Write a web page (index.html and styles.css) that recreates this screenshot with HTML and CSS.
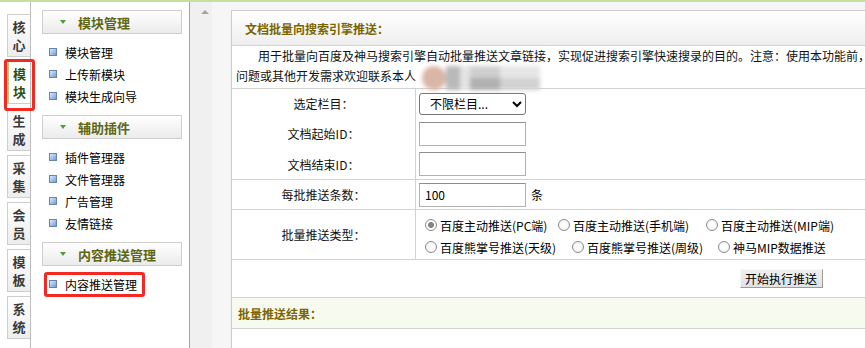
FILE: index.html
```html
<!DOCTYPE html>
<html lang="zh-CN">
<head>
<meta charset="utf-8">
<title>文档批量向搜索引擎推送</title>
<link rel="stylesheet" href="styles.css">
</head>
<body>
<div class="topline"></div>
<div class="frame">
  <nav class="tabs">
    <a class="tab"><span>核</span><span>心</span></a>
    <a class="tab active"><span>模</span><span>块</span></a>
    <a class="tab"><span>生</span><span>成</span></a>
    <a class="tab"><span>采</span><span>集</span></a>
    <a class="tab"><span>会</span><span>员</span></a>
    <a class="tab"><span>模</span><span>板</span></a>
    <a class="tab"><span>系</span><span>统</span></a>
    <span class="mark mark-tab"></span>
  </nav>
  <aside class="sidebar">
    <section class="group">
      <h3 class="group-head"><span class="caret"></span>模块管理</h3>
      <ul class="group-list">
        <li>模块管理</li>
        <li>上传新模块</li>
        <li>模块生成向导</li>
      </ul>
    </section>
    <section class="group">
      <h3 class="group-head"><span class="caret"></span>辅助插件</h3>
      <ul class="group-list">
        <li>插件管理器</li>
        <li>文件管理器</li>
        <li>广告管理</li>
        <li>友情链接</li>
      </ul>
    </section>
    <section class="group">
      <h3 class="group-head"><span class="caret"></span>内容推送管理</h3>
      <ul class="group-list">
        <li class="marked">内容推送管理<span class="mark mark-item"></span></li>
      </ul>
    </section>
  </aside>
  <div class="scrollbar"><span class="arrow-up"></span></div>
  <main class="main">
    <div class="panel">
      <div class="panel-head">文档批量向搜索引擎推送：</div>
      <div class="desc">
        <p class="line first">用于批量向百度及神马搜索引擎自动批量推送文章链接，实现促进搜索引擎快速搜录的目的。注意：使用本功能前，</p>
        <p class="line">问题或其他开发需求欢迎联系本人<span class="blur"><span class="b1"></span><span class="b2"></span><span class="b3"></span><span class="b4"></span><span class="b5"></span></span></p>
      </div>
      <div class="form">
        <div class="row r1">
          <div class="label">选定栏目：</div>
          <div class="field"><select class="sel"><option>不限栏目...</option></select></div>
        </div>
        <div class="row r2">
          <div class="label">文档起始ID：</div>
          <div class="field"><input class="txt" type="text" value=""></div>
        </div>
        <div class="row r3 bordered">
          <div class="label">文档结束ID：</div>
          <div class="field"><input class="txt" type="text" value=""></div>
        </div>
        <div class="row r4 bordered">
          <div class="label">每批推送条数：</div>
          <div class="field"><input class="txt" type="text" value="100"><span class="unit">条</span></div>
        </div>
        <div class="row r5 bordered">
          <div class="label">批量推送类型：</div>
          <div class="field radios">
            <div class="rline">
              <label class="opt w1"><input type="radio" name="t" checked>百度主动推送(PC端)</label>
              <label class="opt w2"><input type="radio" name="t">百度主动推送(手机端)</label>
              <label class="opt"><input type="radio" name="t">百度主动推送(MIP端)</label>
            </div>
            <div class="rline">
              <label class="opt w3"><input type="radio" name="t">百度熊掌号推送(天级)</label>
              <label class="opt w4"><input type="radio" name="t">百度熊掌号推送(周级)</label>
              <label class="opt"><input type="radio" name="t">神马MIP数据推送</label>
            </div>
          </div>
        </div>
        <div class="row-btn bordered">
          <button class="btn" type="button">开始执行推送</button>
        </div>
        <div class="result-head bordered">批量推送结果：</div>
      </div>
    </div>
  </main>
</div>
</body>
</html>
```

FILE: styles.css
```css
* { box-sizing: border-box; }
html, body {
  margin: 0;
  padding: 0;
  width: 865px;
  height: 348px;
  overflow: hidden;
  background: #fff;
  font-family: "Noto Sans CJK SC", "Noto Sans", sans-serif;
  font-size: 12px;
  color: #000;
}
.topline {
  height: 2px;
  background: #c4df9f;
}
.frame {
  display: flex;
  height: 346px;
}

/* left tab column */
.tabs {
  position: relative;
  width: 31px;
  flex: none;
  border-right: 1px solid #bdbdbd;
  padding-top: 12px;
  display: flex;
  flex-direction: column;
  gap: 4px;
}
.tab {
  display: flex;
  flex-direction: column;
  align-items: center;
  justify-content: center;
  margin-left: 7px;
  width: 23px;
  height: 43px;
  border: 1px solid #cdcdcd;
  border-right: none;
  background: linear-gradient(#ffffff, #ededed);
  font-size: 13px;
  font-weight: bold;
  color: #3a3a3a;
}
.tab span {
  display: block;
  height: 18px;
  line-height: 18px;
  overflow: hidden;
}
.tab.active {
  background: #fff;
  border-left: 2px solid #a9d475;
  color: #2c4f10;
}
.mark {
  position: absolute;
  border: 3px solid #f42a22;
  border-radius: 3px;
  pointer-events: none;
}
.mark-tab {
  left: 4px;
  top: 57px;
  width: 31px;
  height: 52px;
}

/* sidebar */
.sidebar {
  width: 159px;
  flex: none;
  border-right: 1px solid #a3a3a3;
  padding: 8px 0 0 11px;
}
.group-head {
  margin: 0;
  width: 140px;
  height: 24px;
  border: 1px solid #cfcfcf;
  background: linear-gradient(#ffffff, #ebebeb);
  display: flex;
  align-items: center;
  padding-left: 17px;
  font-size: 13px;
  font-weight: bold;
  color: #5f6612;
}
.caret {
  width: 0;
  height: 0;
  border-left: 3px solid transparent;
  border-right: 3px solid transparent;
  border-top: 4px solid #4f9c3e;
  margin-right: 12px;
}
.group-list {
  list-style: none;
  margin: 0;
  padding: 7px 0 8px;
}
.group-list li {
  position: relative;
  display: flex;
  align-items: center;
  height: 22px;
  padding-left: 7px;
  width: 140px;
}
.group-list li::before {
  content: "";
  width: 6px;
  height: 6px;
  border: 1px solid #6a84a8;
  background: linear-gradient(135deg, #dbe9fa, #6f9ed9);
  margin-right: 8px;
  flex: none;
}
.mark-item {
  left: 2px;
  top: -1px;
  width: 101px;
  height: 25px;
}

/* scrollbar strip */
.scrollbar {
  width: 22px;
  flex: none;
  background: #f0f0f0;
  padding: 8px 0 0 11px;
}
.arrow-up {
  display: block;
  width: 0;
  height: 0;
  border-left: 4px solid transparent;
  border-right: 4px solid transparent;
  border-bottom: 4px solid #a5a5a5;
}

/* main */
.main {
  flex: 1;
  min-width: 0;
  background: #f6f6f6;
  padding: 8px 0 0 19px;
  overflow: hidden;
}
.panel {
  width: 1099px;
  height: 400px;
  background: #fff;
  border: 1px solid #cccccc;
  border-right: none;
}
.panel-head {
  height: 35px;
  border-bottom: 1px solid #d2d2d2;
  background: linear-gradient(#ffffff, #eeeeee);
  display: flex;
  align-items: center;
  padding-left: 13px;
  font-weight: bold;
  color: #7a6500;
}
.desc {
  height: 43px;
  border-bottom: 1px solid #d2d2d2;
  padding: 0 5px 0 4px;
}
.line {
  margin: 0;
  line-height: 20px;
  white-space: nowrap;
  color: #111;
}
.line.first { text-indent: 22px; }
.blur {
  vertical-align: middle;
  margin-left: 6px;
  width: 122px;
  height: 24px;
  display: inline-flex;
  filter: blur(2px);
}
.blur span { display: block; height: 24px; }
.b1 { width: 24px; background: #d9b6a6; border-radius: 12px; }
.b2 { width: 14px; background: #b9b9b9; }
.b3 { width: 10px; background: #e4e4e4; }
.b4 { width: 30px; background: linear-gradient(#cfcfcf 50%, #b0b0b0 50%); }
.b5 { width: 40px; background: linear-gradient(#e6e6e6 50%, #d2d2d2 50%); }

/* form */
.row {
  display: grid;
  grid-template-columns: 184px 1fr;
}
.bordered { border-bottom: 1px solid #d2d2d2; }
.r1 { height: 29px; }
.r2 { height: 31px; }
.r3 { height: 31px; }
.r4 { height: 30px; }
.r5 { height: 50px; }
.label {
  border-right: 1px solid #d2d2d2;
  display: flex;
  align-items: center;
  justify-content: center;
  color: #111;
}
.field {
  display: flex;
  align-items: center;
  padding-left: 3px;
}
.sel {
  width: 107px;
  height: 22px;
  font-family: inherit;
  font-size: 12px;
  color: #000;
  padding-left: 6px;
  border: 1px solid #767676;
  border-radius: 3px;
  background: #fff;
}
.txt {
  width: 107px;
  height: 24px;
  border: 1px solid #b2b2b2;
  border-top-color: #8e8e8e;
  padding: 0 5px;
  font-family: inherit;
  font-size: 12px;
  color: #000;
  outline: none;
}
.unit { margin-left: 5px; }
.radios {
  flex-direction: column;
  align-items: flex-start;
  justify-content: flex-start;
  padding: 4px 0 0 9px;
}
.rline {
  display: flex;
  height: 22px;
  align-items: center;
}
.opt {
  display: inline-flex;
  align-items: center;
  white-space: nowrap;
}
.w1 { width: 133px; }
.w2 { width: 148px; }
.w3 { width: 147px; }
.w4 { width: 146px; }
.opt input {
  appearance: none;
  -webkit-appearance: none;
  width: 12px;
  height: 12px;
  margin: 0 3px 0 0;
  border: 1px solid #8a8a8a;
  border-radius: 50%;
  background: radial-gradient(circle, #fff 0, #f2f2f2 100%);
}
.opt input:checked {
  background: radial-gradient(circle, #858585 0 2.6px, #fff 3.4px);
}
.row-btn {
  height: 38px;
  display: flex;
  align-items: center;
  justify-content: center;
}
.btn {
  width: 83px;
  height: 19px;
  padding: 0;
  font-family: inherit;
  font-size: 12px;
  line-height: 17px;
  color: #000;
  background: linear-gradient(#efefef, #e2e2e2);
  border: 1px solid;
  border-color: #f6f6f6 #9c9c9c #9c9c9c #f6f6f6;
}
.result-head {
  height: 31px;
  background: #f7faee;
  display: flex;
  align-items: center;
  padding-left: 6px;
  font-weight: bold;
  color: #7a6500;
}
```
